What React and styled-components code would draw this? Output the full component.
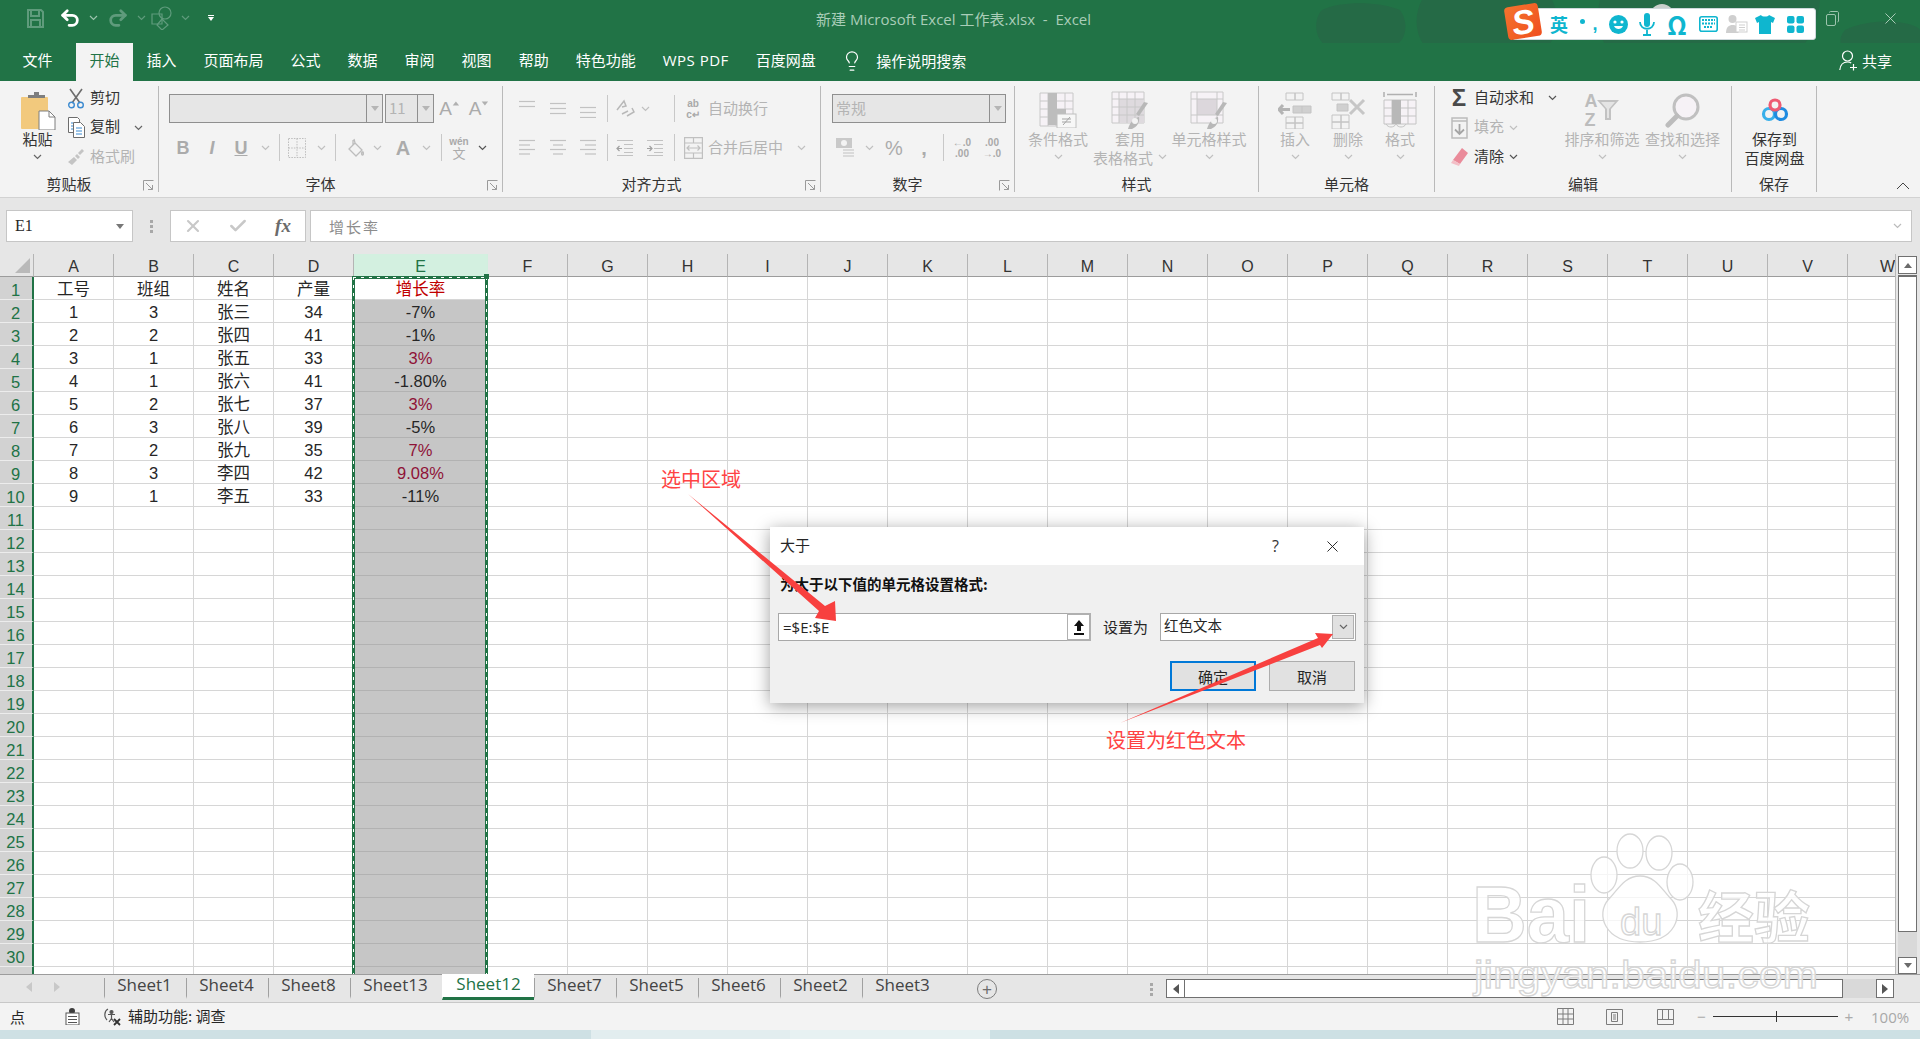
import React from 'react';
import styled, { createGlobalStyle } from 'styled-components';
import { Undo2, Redo2, Lightbulb, X, Check } from 'lucide-react';

const CJK = '"Noto Sans CJK SC", sans-serif';
const UI = '"Open Sans", "Noto Sans CJK SC", sans-serif';
const NUM = '"Liberation Sans", "Noto Sans CJK SC", sans-serif';
const GREEN = '#217346';
const OFF = '#b4b4b4';

const Global = createGlobalStyle`
  html, body { margin: 0; padding: 0; background: #e6e6e6; }
  * { box-sizing: border-box; }
  svg { display: block; flex: none; }
`;

const Page = styled.div`
  position: relative; width: 1920px; height: 1039px; overflow: hidden;
  display: flex; flex-direction: column; font-family: ${CJK}; color: #262626; font-size: 15px;
`;

/* ---------- title ---------- */
const TitleBar = styled.div`
  height: 43px; flex: none; background: ${GREEN}; position: relative;
  display: flex; align-items: center; padding-bottom: 7px;
`;
const Clouds = styled.svg`position: absolute; left: 1300px; top: 0;`;
const Qat = styled.div`display: flex; align-items: center; width: 816px; flex: none; position: relative; padding-left: 22px;`;
const DocTitle = styled.div`
  width: 290px; flex: none; white-space: pre; color: #a9cdb8; font: 15px ${UI}; position: relative;
`;
const WinBtns = styled.div`
  position: relative; margin-left: auto; display: flex; align-items: center; gap: 42px; padding-right: 20px;
`;
const Slot = styled.div`
  width: ${p => p.$w}px; flex: none; display: flex; align-items: center; justify-content: center;
  height: 100%; color: ${p => p.$c || OFF};
`;

const TabBar = styled.div`
  height: 38px; flex: none; background: ${GREEN}; display: flex; align-items: stretch; padding-left: 9px; position: relative;
`;
const Tab = styled.div`
  padding: 0 13.5px 5px; display: flex; align-items: center; white-space: nowrap; font-size: 15px; font-family: ${UI};
  background: ${p => p.$on ? '#f3f3f3' : 'transparent'}; color: ${p => p.$on ? GREEN : '#fff'};
  margin-right: ${p => p.$mr || 0}px; position: relative; letter-spacing: ${p => p.$ls || 0}px;
`;
const Search = styled.div`
  display: flex; align-items: center; gap: 13px; margin-left: 12px; color: #fff; font-size: 15px; padding-bottom: 3px;
`;
const Share = styled.div`
  display: flex; align-items: center; gap: 3px; color: #fff; font-size: 15px; margin-left: auto; padding-right: 28px; position: relative; padding-bottom: 3px;
`;

/* ---------- ime ---------- */
const Ime = styled.div`
  position: absolute; left: 1512px; top: 8px; width: 304px; height: 32px; background: #fff; border-radius: 3px;
  border: 1px solid #cfd8dc; display: flex; align-items: center; padding-left: 33px; color: #0fb6cf;
`;
const ImeLogo = styled.div`
  position: absolute; left: 1506px; top: 5px; width: 34px; height: 33px; border-radius: 4px; transform: rotate(-9deg);
  background: linear-gradient(140deg, #f4732e, #f0501e); color: #fff; font: italic 700 34px/32px ${NUM};
  display: flex; align-items: center; justify-content: center;
`;
const ImeBump = styled.div`
  position: absolute; left: 1650px; top: 4px; width: 24px; height: 12px; border-radius: 12px 12px 0 0; background: #c9cfcc;
`;
const ImeSlot = styled.div`
  width: ${p => p.$w}px; flex: none; display: flex; justify-content: center; align-items: center;
  font-weight: 700; font-size: ${p => p.$fs || 16}px; line-height: 1;
`;
const PunctDot = styled.i`width: 5px; height: 5px; border-radius: 50%; background: #0fb6cf; margin: -6px 7px 0 0; display: block;`;
const PunctMark = styled.span`font: 700 18px/1 ${NUM};`;

/* ---------- ribbon ---------- */
const Ribbon = styled.div`
  height: 117px; flex: none; background: #f3f3f3; border-bottom: 1px solid #d2d2d2; padding-top: 5px; display: flex; align-items: flex-start;
`;
const Group = styled.div`
  width: ${p => p.$w}px; height: 106px; flex: none; display: flex; flex-direction: column; border-right: 1px solid #b9b9b9;
`;
const Body = styled.div`
  height: 92px; flex: none; display: flex; padding-left: ${p => p.$pl || 0}px;
`;
const Foot = styled.div`height: 14px; display: flex; align-items: center;`;
const FootLabel = styled.div`flex: 1; text-align: center; font-size: 15px; color: #333; line-height: 14px; position: relative; top: -1px;`;
const LauncherBox = styled.div`width: 20px; flex: none; display: flex; align-items: center; justify-content: center;`;

const Big = styled.div`
  width: ${p => p.$w}px; flex: none; display: flex; flex-direction: column; align-items: center; padding-top: 4px;
  color: ${p => p.$on ? '#333' : OFF}; font-size: 15px; margin-left: ${p => p.$ml || 0}px; white-space: nowrap;
`;
const BigIcon = styled.div`height: 40px; display: flex; align-items: center; justify-content: center; flex: none;`;
const BigLine = styled.div`
  height: 19px; line-height: 17px; padding-bottom: 3px; display: flex; align-items: center; gap: 5px; justify-content: center; flex: none;
`;
const SmallCol = styled.div`display: flex; flex-direction: column; gap: 5.5px; margin-left: ${p => p.$ml || 0}px; width: ${p => p.$w ? p.$w + 'px' : 'auto'}; flex: none;`;
const SmallRow = styled.div`
  height: 24px; display: flex; align-items: center; font-size: 15px; color: ${p => p.$on ? '#333' : OFF}; white-space: nowrap;
`;
const RowText = styled.span`position: relative; top: -2px;`;
const IconSlot = styled.div`width: ${p => p.$w || 20}px; flex: none; display: flex; justify-content: center; align-items: center; margin-right: ${p => p.$mr || 4}px;`;
const ChevGap = styled.span`margin-left: ${p => p.$ml}px; display: inline-flex;`;

const Rows = styled.div`display: flex; flex-direction: column; gap: 10px; padding-top: 8px; flex: none;`;
const Row = styled.div`height: 29px; display: flex; align-items: center; padding-left: ${p => p.$pl || 0}px;`;
const Combo = styled.div`
  width: ${p => p.$w}px; height: 29px; margin-right: ${p => p.$mr || 0}px; flex: none; background: #e6e6e6; border: 1px solid #8f8f8f;
  display: flex; color: ${OFF}; font: 15px ${CJK}; line-height: 25px;
`;
const ComboText = styled.div`flex: 1; padding-left: 3px;`;
const ComboArrow = styled.div`
  width: 16px; border-left: 1px solid #8f8f8f; display: flex; align-items: center; justify-content: center;
`;
const Sep = styled.div`width: 1px; height: 27px; background: #c8c8c8; flex: none;`;
const Tri = styled.div`
  width: 0; height: 0; border-left: 4px solid transparent; border-right: 4px solid transparent;
  ${p => p.$up
    ? `border-bottom: 5px solid ${p.$c || '#b5b5b5'};`
    : `border-top: 5px solid ${p.$c || '#b5b5b5'};`}
`;
const FmtGlyph = styled.span`
  font: ${p => p.$it ? 'italic ' : ''}${p => p.$wt || 700} ${p => p.$fs || 17}px ${NUM}; color: ${p => p.$c || '#ababab'};
  text-decoration: ${p => p.$u ? 'underline' : 'none'}; line-height: 1;
`;
const SizeMark = styled.div`margin: -11px 0 0 0; width: 7px; display: flex; justify-content: center; transform: scale(.8);`;
const TinyStack = styled.div`display: flex; flex-direction: column; align-items: center; font: 700 10px/11px ${NUM}; color: #a9a9a9;`;
const TextRun = styled.div`font-size: 15px; color: ${OFF}; white-space: nowrap; flex: none; padding-left: ${p => p.$pl || 0}px; position: relative; top: -1px;`;
const Sigma = styled.span`font: 700 24px/1 ${NUM}; color: #4a4a4a;`;

/* ---------- formula ---------- */
const FormulaBar = styled.div`
  height: 56px; flex: none; background: #e6e6e6; padding: 12px 8px 12px 6px; display: flex; align-items: stretch;
`;
const NameBox = styled.div`
  width: 127px; flex: none; background: #fff; border: 1px solid #c6c6c6; display: flex; align-items: center; justify-content: space-between;
  padding: 0 8px 0 8px; font: 16px "Liberation Serif", serif;
`;
const Dots = styled.div`
  width: ${p => p.$w}px; flex: none; display: flex; flex-direction: column; gap: 2px; align-items: center; justify-content: center;
  & > i { width: 3px; height: 3px; background: #a8a8a8; display: block; }
`;
const FxBox = styled.div`
  width: 136px; flex: none; background: #fff; border: 1px solid #c6c6c6; display: flex; align-items: center; color: #c8c8c8;
`;
const FxSlot = styled.div`width: ${p => p.$w}px; flex: none; display: flex; justify-content: center;`;
const FxGlyph = styled.span`font: italic 700 19px "Liberation Serif", serif; color: #6b6b6b;`;
const FormulaInput = styled.div`
  flex: 1; margin-left: 4px; background: #fff; border: 1px solid #c6c6c6; display: flex; align-items: center; justify-content: space-between;
  padding: 0 9px 0 18px; color: #8c8c8c; letter-spacing: 2px; font-size: 15px;
`;

/* ---------- sheet ---------- */
const SheetArea = styled.div`height: 720px; flex: none; display: flex; background: #e6e6e6;`;
const Grid = styled.div`width: 1896px; flex: none; overflow: hidden; position: relative; background: #fff; border-right: 1px solid #b8b8b8;`;
const cols = '34px repeat(4, 80px) 134px repeat(18, 80px)';
const HeadRow = styled.div`
  display: grid; grid-template-columns: ${cols}; height: 23px; background: #e6e6e6;
`;
const HeadCell = styled.div`
  border-right: 1px solid ${p => p.$on ? '#d2efdf' : '#b4b4b4'}; border-bottom: 1px solid ${p => p.$on ? GREEN : '#9c9c9c'};
  background: ${p => p.$on ? '#d3f0e0' : '#e6e6e6'}; color: ${p => p.$on ? GREEN : '#333'};
  font: 16px/26px ${NUM}; text-align: center; overflow: hidden;
`;
const Corner = styled.div`
  border-right: 1px solid #b4b4b4; border-bottom: 1px solid #9c9c9c; display: flex; align-items: flex-end; justify-content: flex-end; padding: 0 3px 3px 0;
`;
const DataRow = styled.div`display: grid; grid-template-columns: ${cols}; height: 23px;`;
const RowHead = styled.div`
  background: #d2d2d2; color: ${GREEN}; border-right: 2px solid ${GREEN}; border-bottom: 1px solid #ececec;
  font: 16.5px/26px ${NUM}; text-align: center; padding-right: 1px; overflow: hidden;
`;
const Cell = styled.div`
  border-right: 1px solid #d6d6d6; border-bottom: 1px solid ${p => p.$sel ? '#b2b2b2' : '#d6d6d6'};
  background: ${p => p.$sel ? '#c6c6c6' : '#fff'}; color: ${p => p.$c || '#262626'};
  font: 16.5px/25px ${NUM}; text-align: center; white-space: nowrap; overflow: hidden;
`;
const Ants = styled.div`
  position: absolute; left: 352px; top: 22px; width: 136px; height: 720px; border: 3px solid ${GREEN};
  &::after {
    content: ''; position: absolute; inset: -2px;
    background:
      repeating-linear-gradient(to bottom, #fff 0 3px, transparent 3px 8px) left top / 1px 100% no-repeat,
      repeating-linear-gradient(to bottom, #fff 0 3px, transparent 3px 8px) right top / 1px 100% no-repeat,
      repeating-linear-gradient(to right, #fff 0 3px, transparent 3px 8px) left top / 100% 1px no-repeat;
  }
`;
const Handle = styled.div`position: absolute; left: 484px; top: 20px; width: 5px; height: 5px; background: ${GREEN};`;
const VScroll = styled.div`
  width: 20px; margin-left: 2px; flex: none; display: flex; flex-direction: column; padding-top: 2px;
`;
const ScrollBtn = styled.div`
  width: ${p => p.$w || 19}px; height: ${p => p.$h || 18}px; flex: none; background: #fff; border: 1px solid #707070; display: flex; align-items: center; justify-content: center;
`;
const VThumb = styled.div`width: 19px; height: 657px; flex: none; background: #fff; border: 1px solid #707070; border-top-width: 2px; margin-top: 1px;`;
const VTrack = styled.div`width: 19px; flex: 1; background: #d9d9d9;`;

const SheetTabs = styled.div`
  height: 29px; flex: none; background: #e6e6e6; border-top: 1px solid #9c9c9c; border-bottom: 1px solid #c8c8c8; display: flex; align-items: flex-start;
`;
const TabNav = styled.div`width: 104px; flex: none; display: flex; padding: 7px 0 0 26px; gap: 22px;`;
const SheetTab = styled.div`
  width: ${p => p.$w}px; flex: none; font: 17px/20px ${UI}; text-align: center; padding-right: ${p => p.$on ? 0 : 2}px;
  color: ${p => p.$on ? GREEN : '#444'}; background: ${p => p.$on ? '#fff' : 'transparent'};
  border-bottom: 3px solid ${p => p.$on ? GREEN : 'transparent'};
  border-left: 1px solid ${p => p.$on ? 'transparent' : '#a0a0a0'};
  margin-top: ${p => p.$on ? -1 : 3}px; height: ${p => p.$on ? 26 : 21}px; line-height: ${p => p.$on ? 20 : 13}px;
`;
const PlusBtn = styled.div`
  width: 20px; height: 20px; border: 1px solid #7d7d7d; border-radius: 50%; margin: 4px 0 0 33px; flex: none;
  display: flex; align-items: center; justify-content: center; color: #6d6d6d; font: 17px/1 ${NUM};
`;
const TabDots = styled(Dots)`margin: 4px 0 0 151px; height: 20px;`;
const HBar = styled.div`margin: 4px 0 0 12px; height: 19px; width: 728px; flex: none; display: flex; background: #d9d9d9;`;
const HThumb = styled.div`width: 658px; flex: none; background: #fff; border: 1px solid #707070; border-left-width: 0;`;
const HGap = styled.div`flex: 1;`;

const Status = styled.div`
  height: 27px; flex: none; background: #f3f3f3; display: flex; align-items: center; font-size: 15px; padding-left: 10px;
`;
const StatusSlot = styled.div`
  width: ${p => p.$w}px; margin-left: ${p => p.$ml || 0}px; flex: none; display: flex; justify-content: center; align-items: center;
`;
const StatusText = styled.span`margin-left: 3px; white-space: nowrap; position: relative; top: -1px; font-size: 15px;`;
const StatusRight = styled.div`margin-left: auto; display: flex; align-items: center;`;
const StatusPct = styled.div`color: #a8a8a8; font: 15px ${UI}; width: 40px; margin: 0 9px 0 16px; white-space: nowrap;`;
const Zoomer = styled.div`
  width: 125px; height: 1px; background: #333; margin: 0 5px; position: relative;
  &::after { content: ''; position: absolute; left: 63px; top: -5px; width: 1px; height: 11px; background: #333; }
`;
const Desk = styled.div`flex: 1; display: flex;`;
const DeskPart = styled.div`width: ${p => p.$w ? p.$w + 'px' : 'auto'}; flex: ${p => p.$w ? 'none' : 1}; background: ${p => p.$c};`;

const Collapse = styled.div`
  flex: 1; height: 106px; display: flex; align-items: flex-end; justify-content: flex-end; padding: 0 10px 2px 0;
`;

/* ---------- dialog ---------- */
const Dialog = styled.div`
  position: absolute; left: 770px; top: 527px; width: 594px; height: 176px; background: #f0f0f0;
  box-shadow: 0 3px 16px rgba(0,0,0,.38); font-size: 15px;
`;
const DlgHead = styled.div`height: 38px; background: #fff; display: flex; align-items: center; padding: 0 22px 0 10px;`;
const DlgTitle = styled.div`flex: 1; padding-bottom: 3px;`;
const DlgHelp = styled.div`width: 51px; font: 16px ${UI}; color: #333; text-align: left;`;
const DlgLabel = styled.div`font-weight: 700; font-size: 14.5px; line-height: 20px; padding: 9px 0 0 10px; color: #111;`;
const DlgFields = styled.div`display: flex; align-items: center; margin-top: 19px; padding-left: 8px;`;
const DlgInput = styled.div`
  width: 313px; height: 28px; background: #fff; border: 1px solid #a8a8a8; display: flex; align-items: center; font: 15px ${UI};
  padding-left: 4px; justify-content: space-between;
`;
const RefBtn = styled.div`
  width: 24px; height: 28px; margin-right: -1px; background: #fff; border: 2px solid #b0b0b0; border-left-width: 1px; display: flex; align-items: center; justify-content: center;
`;
const DlgText = styled.div`margin: 0 12px; flex: none; position: relative; top: -1px;`;
const DlgSelect = styled.div`
  width: 196px; height: 28px; background: #fff; border: 1px solid #a8a8a8; display: flex; align-items: center; justify-content: space-between; padding-left: 3px; font-size: 14.5px; line-height: 22px;
`;
const SelectValue = styled.span`position: relative; top: -2px;`;
const DropBtn = styled.div`
  width: 22px; height: 24px; margin-right: 1px; background: #e1e1e1; border: 1px solid #b0b0b0; display: flex; align-items: center; justify-content: center;
`;
const DlgBtns = styled.div`display: flex; justify-content: flex-end; gap: 13px; padding-right: 9px; margin-top: 20px;`;
const DlgBtn = styled.div`
  width: 86px; height: 30px; background: #e1e1e1; border: ${p => p.$on ? '2px solid #0078d7' : '1px solid #adadad'};
  display: flex; align-items: center; justify-content: center; font-size: 15px;
`;

/* ---------- overlay ---------- */
const Overlay = styled.svg`position: absolute; left: 0; top: 0; pointer-events: none;`;
const Note = styled.div`
  position: absolute; left: ${p => p.$x}px; top: ${p => p.$y}px; color: #ff4343; font-size: 20px; line-height: 24px; white-space: nowrap;
`;

/* ---------- icons ---------- */
const Chev = ({ c = '#a0a0a0' }) => (
  <svg width="9" height="6" viewBox="0 0 9 6"><path d="M1 1l3.500 3.500L8 1" fill="none" stroke={c} strokeWidth="1.200" /></svg>
);
const Launcher = () => (
  <svg width="11" height="11" viewBox="0 0 11 11" fill="none" stroke="#9a9a9a"><path d="M.5 10.500v-10h10M3 3l6.500 6.500M9.500 5v4.500H5" /></svg>
);
const SaveIc = () => (
  <svg width="17" height="19" viewBox="0 0 17 19" fill="none" stroke="#5f9b7c" strokeWidth="2"><path d="M1 1h13l2 2v15H1z" /><path d="M4 1v6h8V1M4 18v-7h9v7" /></svg>
);
const ShapeIc = () => (
  <svg width="22" height="24" viewBox="0 0 22 24" fill="none" stroke="#5f9b7c" strokeWidth="1.200"><path d="M1 8h10v10H1z" /><circle cx="14" cy="7" r="6" /><path d="M11 13l6 6-6 5-5-5z" /></svg>
);
const QatMore = () => (
  <svg width="8" height="8" viewBox="0 0 8 8" fill="#fff"><path d="M1 1h6v1H1zM1 3h6L4 7z" /></svg>
);
const ShareIc = () => (
  <svg width="20" height="21" viewBox="0 0 20 21" fill="none" stroke="#fff" strokeWidth="1.200"><circle cx="8.500" cy="6" r="5" /><path d="M.8 20c.5-5 3-8 7.700-8 1.500 0 2.700.3 3.700 1M14.500 14v6.500M11 17.500h7" /></svg>
);
const PasteIc = () => (
  <svg width="36" height="39" viewBox="0 0 36 39">
    <rect x="1" y="6" width="27" height="32" rx="1" fill="#f2c97d" />
    <path d="M8 7V4h6V1h5v3h6v3z" fill="#7e7e7e" />
    <path d="M19 20h10l6 6v13H19z" fill="#fff" stroke="#7e7e7e" />
    <path d="M29 20v6h6" fill="none" stroke="#7e7e7e" />
  </svg>
);
const ScissorsIc = () => (
  <svg width="16" height="21" viewBox="0 0 16 21" fill="none">
    <path d="M2 1l10 14M14 1L4 15" stroke="#6d6d6d" strokeWidth="1.600" />
    <circle cx="3.500" cy="17" r="2.800" stroke="#3b8ad0" strokeWidth="1.400" /><circle cx="12.500" cy="17" r="2.800" stroke="#3b8ad0" strokeWidth="1.400" />
  </svg>
);
const CopyIc = () => (
  <svg width="17" height="21" viewBox="0 0 17 21" fill="#fff" stroke="#6d6d6d">
    <path d="M.5.500h9l2 2v13H.5z" /><path d="M5.500 5.500h7l4 4v11h-11z" />
    <path d="M3 6h2M3 9h2M3 12h2" stroke="#3b8ad0" /><path d="M8 11h6M8 14h6M8 17h6" stroke="#3b8ad0" />
  </svg>
);
const BrushIc = () => (
  <svg width="18" height="18" viewBox="0 0 18 18" fill="#c4c4c4"><path d="M11 5l4-4 2 2-4 4zM10 6l3 3-2 2-3-3zM7 9l3 3-5 5-4-3z" /></svg>
);
const BorderIc = () => (
  <svg width="18" height="20" viewBox="0 0 18 20" fill="none" stroke="#bdbdbd" strokeDasharray="1.500 1.200"><path d="M.5.500h17v19H.5zM.5 10h17M9 .5v19" /></svg>
);
const FillIc = () => (
  <svg width="17" height="20" viewBox="0 0 17 20" fill="none" stroke="#bdbdbd" strokeWidth="1.300"><path d="M8 5l7 7-6 6-7-7zM7 1l1 4M6 2v5" /><path d="M16 14c1 2 0 3-.5 3s-1.500-1-.5-3z" fill="#d5d5d5" /></svg>
);
const LinesIc = ({ kind, n = 3, top = 0, gap = 5 }) => {
  const ws = { l: [16, 11, 16, 11], c: [16, 10, 16, 10], r: [16, 11, 16, 11], f: [16, 16, 16, 16] }[kind];
  return (
    <svg width="18" height="19" viewBox="0 0 18 19" stroke="#c2c2c2" strokeWidth="1.200">
      {Array.from({ length: n }).map((_, i) => {
        const w = ws[i];
        const x = kind === 'r' ? 17 - w : kind === 'c' ? 9 - w / 2 : 1;
        return <path key={i} d={`M${x} ${top + i * gap + .5}h${w}`} />;
      })}
    </svg>
  );
};
const IndentIc = ({ out }) => (
  <svg width="18" height="18" viewBox="0 0 18 18" fill="none" stroke="#c2c2c2" strokeWidth="1.200">
    <path d="M1 1.500h16M8 5.500h9M8 9.500h9M8 13.500h9M1 16.500h16" />
    <path d={out ? 'M6 9.500H1m2.500-2.500L1 9.500 3.500 12' : 'M1 9.500h5M3.500 7L6 9.500 3.500 12'} stroke="#a0a0a0" />
  </svg>
);
const OrientIc = () => (
  <svg width="20" height="20" viewBox="0 0 20 20" fill="none" stroke="#b8b8b8" strokeWidth="1.500"><path d="M2 11L9 2l2 5-4 1M7 15l6-3M12 17l7-4-2-4" /></svg>
);
const MergeIc = () => (
  <svg width="19" height="22" viewBox="0 0 19 22" fill="none" stroke="#c0c0c0" strokeWidth="1.200"><path d="M.6.600h17.800v20.800H.6zM.6 6h17.800M.6 16h17.800M9.500.6V6M9.500 16v5.400M3 11h13M5.500 8.500L3 11l2.500 2.500M13.500 8.500L16 11l-2.500 2.500" /></svg>
);
const MoneyIc = () => (
  <svg width="20" height="22" viewBox="0 0 20 22"><rect x="1" y="1" width="16" height="10" fill="#c9c9c9" /><circle cx="9" cy="6" r="3" fill="#f3f3f3" /><path d="M8 12h11v2H8zM8 15h11v2H8zM8 18h11v2H8z" fill="#dadada" /></svg>
);
const CondIc = () => (
  <svg width="38" height="36" viewBox="0 0 38 36">
    <path d="M1 1h33v33H1z" fill="#f6f2f6" stroke="#c8c8c8" />
    <path d="M1 9h33M1 17h33M1 25h33M9 1v33M17 1v33M26 1v33" stroke="#c8c8c8" fill="none" />
    <path d="M9 1h9v8h0v8h9v8h-9v8H9v-8z" fill="#bdbdbd" />
    <rect x="18" y="22" width="19" height="14" fill="#f7f7f7" stroke="#c0c0c0" />
    <path d="M24 33l7-8M23 27h9M23 30h9" stroke="#a5a5a5" />
  </svg>
);
const TableIc = ({ cell }) => (
  <svg width="38" height="38" viewBox="0 0 38 38">
    <path d="M1 1h32v31H1z" fill="#f6f2f6" stroke="#c8c8c8" />
    {cell ? <path d="M7 8h20v16H7z" fill="#dcd7dc" /> : <path d="M8 8h25v24H8z" fill="#dedade" />}
    {cell ? <path d="M1 8h32M1 24h32M7 1v31M27 1v31" stroke="#c8c8c8" fill="none" /> :
      <path d="M1 8h32M1 16h32M1 24h32M8 1v31M16 1v31M24 1v31" stroke="#c8c8c8" fill="none" />}
    <path d="M37 12l-9 13-3-2 8-12z" fill="#b8b8b8" /><path d="M17 38c2-7 6-11 11-12 1 5-2 10-7 12z" fill="#b8b8b8" />
    <circle cx="24" cy="30" r="3" fill="#f3f3f3" />
  </svg>
);
const InsertIc = () => (
  <svg width="34" height="38" viewBox="0 0 34 38" fill="none" stroke="#c4c4c4"><path d="M8 2h9v7H8zM17 2h8v7h-8zM8 26h9v6H8zM17 26h8v6h-8zM8 32h9v6H8zM17 32h8v6h-8z" /><path d="M15 15h18v7H15zM24 15v7" fill="#d0d0d0" /><path d="M1 18.500h11M5 14l-4 4.500L5 23" stroke="#b4b4b4" strokeWidth="3" /></svg>
);
const DeleteIc = () => (
  <svg width="36" height="38" viewBox="0 0 36 38" fill="none" stroke="#c4c4c4"><path d="M2 2h9v7H2zM11 2h8v7h-8zM2 24h9v7H2zM11 24h8v7h-8zM2 31h9v7H2zM11 31h8v7h-8z" /><path d="M7 13h11v7H7z" fill="#d0d0d0" /><path d="M20 9l14 14M34 9L20 23" stroke="#c6c6c6" strokeWidth="3" /></svg>
);
const FormatIc = () => (
  <svg width="34" height="38" viewBox="0 0 34 38" fill="none" stroke="#c4c4c4"><path d="M1 1v5M33 1v5M4 3.500h26" stroke="#b0b0b0" strokeWidth="1.500" /><path d="M1 9h32v24H1z" fill="#f6f2f6" /><path d="M1 17h32M1 25h32M9 9v24M17 9v24M25 9v24" /><path d="M9 9h9v24H9z" fill="#b8b8b8" stroke="none" /><path d="M3 33c2 4 8 4 10 0M13 33c2 4 8 4 10 0" /></svg>
);
const FillDownIc = () => (
  <svg width="17" height="22" viewBox="0 0 17 22" fill="none" stroke="#bcbcbc" strokeWidth="1.200"><path d="M1 1h15v20H1zM1 4h15" strokeWidth="1.500" /><path d="M8.500 7v10M4 12.500l4.500 4.500 4.500-4.500" stroke="#a5a5a5" strokeWidth="1.800" /></svg>
);
const EraserIc = () => (
  <svg width="17" height="18" viewBox="0 0 17 18"><path d="M11 0l6 5-8 11-7-4z" fill="#ea8b9a" /><path d="M2 12l7 4-1 2-8-3z" fill="#f3bec6" /></svg>
);
const SortIc = () => (
  <svg width="24" height="22" viewBox="0 0 24 22"><path d="M1 1h22l-8 9v11h-6V10z" fill="#c2c2c2" /><path d="M5 3h14l-6 7v9h-2v-9z" fill="#e4e4e4" /></svg>
);
const SortLetters = styled.div`
  display: flex; flex-direction: column; gap: 1px; font: 700 18px/18px ${NUM}; color: #bcbcbc; margin-right: -2px;
`;
const FindIc = () => (
  <svg width="35" height="35" viewBox="0 0 35 35" fill="none"><circle cx="21" cy="14" r="12" fill="#f6f2f6" stroke="#c0c0c0" strokeWidth="3" /><path d="M12 23L3 32" stroke="#bcbcbc" strokeWidth="5" strokeLinecap="round" /></svg>
);
const CloudIc = () => (
  <svg width="28" height="24" viewBox="0 0 28 24" fill="none" strokeWidth="3.200">
    <circle cx="8" cy="16" r="5.500" stroke="#38b0ea" /><circle cx="20" cy="16" r="5.500" stroke="#1f8be0" /><circle cx="14" cy="7" r="5" stroke="#ee5a72" />
  </svg>
);

const SmileIc = () => (
  <svg width="19" height="19" viewBox="0 0 19 19"><circle cx="9.500" cy="9.500" r="9.500" fill="#0fb6cf" /><circle cx="6" cy="7" r="1.600" fill="#fff" /><circle cx="13" cy="7" r="1.600" fill="#fff" /><path d="M5 11c1.500 4 7.500 4 9 0z" fill="#fff" /></svg>
);
const MicIc = () => (
  <svg width="16" height="23" viewBox="0 0 16 23" fill="none" stroke="#0fb6cf"><rect x="5" y="0" width="6" height="14" rx="3" fill="#0fb6cf" stroke="none" /><path d="M1 9c0 9 14 9 14 0M8 17v5M4 22h8" strokeWidth="1.800" /></svg>
);
const KbIc = () => (
  <svg width="19" height="16" viewBox="0 0 19 16"><rect x=".8" y=".8" width="17.400" height="14.400" rx="2" fill="none" stroke="#0fb6cf" strokeWidth="1.600" /><path d="M3 4h13M3 7.500h13M5 11h9" stroke="#0fb6cf" strokeWidth="2" strokeDasharray="2 1" /></svg>
);
const UserIc = () => (
  <svg width="22" height="18" viewBox="0 0 22 18"><circle cx="6.500" cy="4" r="4" fill="#cfcfcf" /><path d="M0 18c0-6 3-8 6.500-8s6 1 6 8z" fill="#cfcfcf" /><rect x="10" y="7" width="11" height="10" fill="#fff" stroke="#cfcfcf" /><path d="M13 10h6M13 12.500h6M13 15h6" stroke="#cfcfcf" /></svg>
);
const ShirtIc = () => (
  <svg width="20" height="19" viewBox="0 0 20 19"><path d="M6 0c1 2 7 2 8 0l6 3-2 5-2-1v12H4V7L2 8 0 3z" fill="#0fb6cf" /></svg>
);
const AppsIc = () => (
  <svg width="17" height="17" viewBox="0 0 17 17" fill="#0fb6cf"><rect width="7.500" height="7.500" rx="2" /><rect x="9.500" width="7.500" height="7.500" rx="2" /><rect y="9.500" width="7.500" height="7.500" rx="2" /><rect x="9.500" y="9.500" width="7.500" height="7.500" rx="2" /></svg>
);
const RestoreIc = () => (
  <svg width="13" height="15" viewBox="0 0 13 15" fill="none" stroke="#9cc4ad"><rect x=".5" y="3.500" width="9" height="11" rx="1.500" /><path d="M3.500 1.500c0-.6.400-1 1-1h6.500c1 0 1.500.5 1.500 1.500v8c0 .600-.400 1-1 1" /></svg>
);
const ClockIc = () => (
  <svg width="15" height="17" viewBox="0 0 15 17" fill="#555"><circle cx="7" cy="3" r="3" fill="#3d3d3d" /><rect x="1" y="5" width="13" height="12" fill="#fff" stroke="#555" /><path d="M3 8h9v1H3zM3 11h9v1H3zM3 14h9v1H3z" fill="#555" /></svg>
);
const AccessIc = () => (
  <svg width="20" height="18" viewBox="0 0 20 18" fill="none" stroke="#555" strokeWidth="1.200"><path d="M5 1C1 3 1 9 4 12" /><circle cx="8.500" cy="4" r="1.500" fill="#555" /><path d="M5 6.500h7M8.500 6.500v4M6 14l2.500-3.500L11 14" /><path d="M11 11l6 6M17 11l-6 6" stroke="#333" strokeWidth="1.800" /></svg>
);
const ViewNormal = () => (
  <svg width="17" height="17" viewBox="0 0 17 17" fill="none" stroke="#7c7c7c"><path d="M.5.500h16v16H.5zM.5 6h16M.5 11h16M6 .5v16M11 .5v16" /></svg>
);
const ViewPage = () => (
  <svg width="17" height="16" viewBox="0 0 17 16" fill="none" stroke="#7c7c7c"><path d="M.5.500h16v15H.5z" /><path d="M5.500 3.500h6v9h-6zM7 6h3M7 8h3M7 10h3" /></svg>
);
const ViewBreak = () => (
  <svg width="17" height="16" viewBox="0 0 17 16" fill="none" stroke="#7c7c7c"><path d="M.5.500h16v15H.5zM.5 10.500h16M5.500.5v10M11.500.5v10" /></svg>
);

const ArrowLeft = ({ c = '#555' }) => <svg width="6" height="10" viewBox="0 0 6 10" fill={c}><path d="M6 0v10L0 5z" /></svg>;
const ArrowRight = ({ c = '#555' }) => <svg width="6" height="10" viewBox="0 0 6 10" fill={c}><path d="M0 0v10l6-5z" /></svg>;

/* ---------- data ---------- */
const LETTERS = 'ABCDEFGHIJKLMNOPQRSTUVW'.split('');
const RED = '#8f1237';
const DATA = [
  { v: ['工号', '班组', '姓名', '产量', '增长率'], c: '#c00000' },
  { v: ['1', '3', '张三', '34', '-7%'] },
  { v: ['2', '2', '张四', '41', '-1%'] },
  { v: ['3', '1', '张五', '33', '3%'], c: RED },
  { v: ['4', '1', '张六', '41', '-1.80%'] },
  { v: ['5', '2', '张七', '37', '3%'], c: RED },
  { v: ['6', '3', '张八', '39', '-5%'] },
  { v: ['7', '2', '张九', '35', '7%'], c: RED },
  { v: ['8', '3', '李四', '42', '9.08%'], c: RED },
  { v: ['9', '1', '李五', '33', '-11%'] },
];
const TABS = [['Sheet1', 82], ['Sheet4', 82], ['Sheet8', 82], ['Sheet13', 92], ['Sheet12', 92, true], ['Sheet7', 82], ['Sheet5', 82], ['Sheet6', 82], ['Sheet2', 82], ['Sheet3', 82]];

const Foots = ({ text, launcher }) => (
  <Foot><FootLabel>{text}</FootLabel>{launcher && <LauncherBox><Launcher /></LauncherBox>}</Foot>
);

export default function App() {
  return (
    <Page>
      <Global />
      <TitleBar>
        <Clouds width="620" height="81" viewBox="0 0 620 81" fill="#256a46">
          <path d="M22 10c20-10 60-8 78 0 10 14 6 34-10 38-20 6-56 4-66-4-10-8-10-26-2-34z" />
          <path d="M122 0h130c10 20 4 40-8 50-30 12-92 12-116 0-14-14-14-36-6-50z" />
          <path d="M300 0h220c-4 40-20 60-60 60-50 6-130 8-150-8-12-14-14-36-10-52z" />
          <path d="M545 30c30-14 70-8 75 0v30h-60c-20-6-24-20-15-30z" />
        </Clouds>
        <Qat>
          <Slot $w={26}><SaveIc /></Slot>
          <Slot $w={44} $c="#fff"><Undo2 size={22} strokeWidth={3} /></Slot>
          <Slot $w={2}><Chev c="#9cc4ad" /></Slot>
          <Slot $w={47} $c="#5f9b7c"><Redo2 size={22} strokeWidth={3} /></Slot>
          <Slot $w={0}><Chev c="#5f9b7c" /></Slot>
          <Slot $w={42}><ShapeIc /></Slot>
          <Slot $w={4}><Chev c="#5f9b7c" /></Slot>
          <Slot $w={48}><QatMore /></Slot>
        </Qat>
        <DocTitle>{'新建 Microsoft Excel 工作表.xlsx  -  Excel'}</DocTitle>
        <WinBtns>
          <RestoreIc />
          <X size={19} strokeWidth={1} color="#cfe3d7" />
        </WinBtns>
      </TitleBar>

      <TabBar>
        <Tab $mr={10}>文件</Tab>
        <Tab $on>开始</Tab>
        {['插入', '页面布局', '公式', '数据', '审阅', '视图', '帮助', '特色功能'].map(t => <Tab key={t}>{t}</Tab>)}
        <Tab $ls={.5}>WPS PDF</Tab>
        <Tab>百度网盘</Tab>
        <Search><Lightbulb size={22} strokeWidth={1.3} color="#fff" /><span>操作说明搜索</span></Search>
        <Share><ShareIc /><span>共享</span></Share>
      </TabBar>

      <ImeBump />
      <Ime>
        <ImeSlot $w={26} $fs={18}>英</ImeSlot>
        <ImeSlot $w={34}><PunctDot /><PunctMark>,</PunctMark></ImeSlot>
        <ImeSlot $w={24}><SmileIc /></ImeSlot>
        <ImeSlot $w={34}><MicIc /></ImeSlot>
        <ImeSlot $w={26} $fs={25}>Ω</ImeSlot>
        <ImeSlot $w={36}><KbIc /></ImeSlot>
        <ImeSlot $w={22}><UserIc /></ImeSlot>
        <ImeSlot $w={34}><ShirtIc /></ImeSlot>
        <ImeSlot $w={26}><AppsIc /></ImeSlot>
      </Ime>
      <ImeLogo>S</ImeLogo>

      <Ribbon>
        <Group $w={159}>
          <Body>
            <Big $w={41} $ml={17} $on>
              <BigIcon><PasteIc /></BigIcon>
              <BigLine>粘贴</BigLine>
              <BigLine><Chev c="#666" /></BigLine>
            </Big>
            <SmallCol $ml={8}>
              <SmallRow $on><IconSlot><ScissorsIc /></IconSlot><RowText>剪切</RowText></SmallRow>
              <SmallRow $on><IconSlot><CopyIc /></IconSlot><RowText>复制</RowText><ChevGap $ml={14}><Chev c="#666" /></ChevGap></SmallRow>
              <SmallRow><IconSlot><BrushIc /></IconSlot><RowText>格式刷</RowText></SmallRow>
            </SmallCol>
          </Body>
          <Foots text="剪贴板" launcher />
        </Group>

        <Group $w={344}>
          <Body $pl={10}>
            <Rows>
              <Row>
                <Combo $w={214} $mr={2}><ComboText /><ComboArrow><Tri /></ComboArrow></Combo>
                <Combo $w={49}><ComboText>11</ComboText><ComboArrow><Tri /></ComboArrow></Combo>
                <Slot $w={30}><FmtGlyph $wt={400} $fs={19}>A</FmtGlyph><SizeMark><Tri $up $c="#b0b0b0" /></SizeMark></Slot>
                <Slot $w={29}><FmtGlyph $wt={400} $fs={19}>A</FmtGlyph><SizeMark><Tri $c="#b0b0b0" /></SizeMark></Slot>
              </Row>
              <Row>
                <Slot $w={28}><FmtGlyph $fs={18}>B</FmtGlyph></Slot>
                <Slot $w={30}><FmtGlyph $fs={18} $it>I</FmtGlyph></Slot>
                <Slot $w={28}><FmtGlyph $fs={18} $u>U</FmtGlyph></Slot>
                <Slot $w={20}><Chev c="#c0c0c0" /></Slot>
                <Slot $w={8}><Sep /></Slot>
                <Slot $w={28}><BorderIc /></Slot>
                <Slot $w={20}><Chev c="#c0c0c0" /></Slot>
                <Slot $w={8}><Sep /></Slot>
                <Slot $w={32}><FillIc /></Slot>
                <Slot $w={12}><Chev c="#c0c0c0" /></Slot>
                <Slot $w={40}><FmtGlyph $fs={20}>A</FmtGlyph></Slot>
                <Slot $w={6}><Chev c="#c0c0c0" /></Slot>
                <Slot $w={24}><Sep /></Slot>
                <Slot $w={12}><TinyStack>wén<FmtGlyph $wt={400} $fs={13}>文</FmtGlyph></TinyStack></Slot>
                <Slot $w={34}><Chev c="#555" /></Slot>
              </Row>
            </Rows>
          </Body>
          <Foots text="字体" launcher />
        </Group>

        <Group $w={318}>
          <Body $pl={8}>
            <Rows>
              <Row>
                <Slot $w={32}><LinesIc kind="f" n={2} top={2} /></Slot>
                <Slot $w={30}><LinesIc kind="f" n={3} top={4} /></Slot>
                <Slot $w={30}><LinesIc kind="f" n={3} top={8} /></Slot>
                <Slot $w={8}><Sep /></Slot>
                <Slot $w={28}><OrientIc /></Slot>
                <Slot $w={12}><Chev c="#c0c0c0" /></Slot>
                <Slot $w={19} />
                <Slot $w={9}><Sep /></Slot>
                <Slot $w={28}><TinyStack>ab<span>c↵</span></TinyStack></Slot>
                <TextRun $pl={1}>自动换行</TextRun>
              </Row>
              <Row>
                <Slot $w={32}><LinesIc kind="l" n={4} top={2} gap={4.5} /></Slot>
                <Slot $w={30}><LinesIc kind="c" n={4} top={2} gap={4.5} /></Slot>
                <Slot $w={30}><LinesIc kind="r" n={4} top={2} gap={4.5} /></Slot>
                <Slot $w={8}><Sep /></Slot>
                <Slot $w={28}><IndentIc out /></Slot>
                <Slot $w={32}><IndentIc /></Slot>
                <Slot $w={7}><Sep /></Slot>
                <Slot $w={30}><MergeIc /></Slot>
                <TextRun>合并后居中</TextRun>
                <Slot $w={36}><Chev c="#c0c0c0" /></Slot>
              </Row>
            </Rows>
          </Body>
          <Foots text="对齐方式" launcher />
        </Group>

        <Group $w={194}>
          <Body $pl={8}>
            <Rows>
              <Row $pl={3}>
                <Combo $w={174}><ComboText>常规</ComboText><ComboArrow><Tri /></ComboArrow></Combo>
              </Row>
              <Row>
                <Slot $w={32}><MoneyIc /></Slot>
                <Slot $w={16}><Chev c="#c0c0c0" /></Slot>
                <Slot $w={34}><FmtGlyph $wt={400} $fs={20}>%</FmtGlyph></Slot>
                <Slot $w={26}><FmtGlyph $fs={20}>,</FmtGlyph></Slot>
                <Slot $w={13}><Sep /></Slot>
                <Slot $w={24}><TinyStack><span>←.0</span><span>.00</span></TinyStack></Slot>
                <Slot $w={36}><TinyStack><span>.00</span><span>→.0</span></TinyStack></Slot>
              </Row>
            </Rows>
          </Body>
          <Foots text="数字" launcher />
        </Group>

        <Group $w={244}>
          <Body $pl={9}>
            <Big $w={68}><BigIcon><CondIc /></BigIcon><BigLine>条件格式</BigLine><BigLine><Chev c="#c0c0c0" /></BigLine></Big>
            <Big $w={76}><BigIcon><TableIc /></BigIcon><BigLine>套用</BigLine><BigLine>表格格式<Chev c="#c0c0c0" /></BigLine></Big>
            <Big $w={82}><BigIcon><TableIc cell /></BigIcon><BigLine>单元格样式</BigLine><BigLine><Chev c="#c0c0c0" /></BigLine></Big>
          </Body>
          <Foots text="样式" />
        </Group>

        <Group $w={176}>
          <Body $pl={10}>
            <Big $w={52}><BigIcon><InsertIc /></BigIcon><BigLine>插入</BigLine><BigLine><Chev c="#c0c0c0" /></BigLine></Big>
            <Big $w={54}><BigIcon><DeleteIc /></BigIcon><BigLine>删除</BigLine><BigLine><Chev c="#c0c0c0" /></BigLine></Big>
            <Big $w={50}><BigIcon><FormatIc /></BigIcon><BigLine>格式</BigLine><BigLine><Chev c="#c0c0c0" /></BigLine></Big>
          </Body>
          <Foots text="单元格" />
        </Group>

        <Group $w={297}>
          <Body>
            <SmallCol $ml={12} $w={115}>
              <SmallRow $on><IconSlot $w={24} $mr={3}><Sigma>Σ</Sigma></IconSlot><RowText>自动求和</RowText><ChevGap $ml={14}><Chev c="#555" /></ChevGap></SmallRow>
              <SmallRow><IconSlot $w={24} $mr={3}><FillDownIc /></IconSlot><RowText>填充</RowText><ChevGap $ml={5}><Chev c="#c0c0c0" /></ChevGap></SmallRow>
              <SmallRow $on><IconSlot $w={24} $mr={3}><EraserIc /></IconSlot><RowText>清除</RowText><ChevGap $ml={5}><Chev c="#555" /></ChevGap></SmallRow>
            </SmallCol>
            <Big $w={80}>
              <BigIcon><SortLetters><span>A</span><span>Z</span></SortLetters><SortIc /></BigIcon>
              <BigLine>排序和筛选</BigLine><BigLine><Chev c="#c0c0c0" /></BigLine>
            </Big>
            <Big $w={81}><BigIcon><FindIc /></BigIcon><BigLine>查找和选择</BigLine><BigLine><Chev c="#c0c0c0" /></BigLine></Big>
          </Body>
          <Foots text="编辑" />
        </Group>

        <Group $w={85}>
          <Body>
            <Big $w={85} $on><BigIcon><CloudIc /></BigIcon><BigLine>保存到</BigLine><BigLine>百度网盘</BigLine></Big>
          </Body>
          <Foots text="保存" />
        </Group>
        <Collapse>
          <svg width="14" height="8" viewBox="0 0 14 8" fill="none" stroke="#444"><path d="M1 7l6-6 6 6" /></svg>
        </Collapse>
      </Ribbon>

      <FormulaBar>
        <NameBox>E1<Tri $c="#777" /></NameBox>
        <Dots $w={37}><i /><i /><i /></Dots>
        <FxBox>
          <FxSlot $w={44}><X size={20} strokeWidth={2.5} /></FxSlot>
          <FxSlot $w={46}><Check size={20} strokeWidth={3} /></FxSlot>
          <FxSlot $w={44}><FxGlyph>fx</FxGlyph></FxSlot>
        </FxBox>
        <FormulaInput>增长率<Chev c="#bbb" /></FormulaInput>
      </FormulaBar>

      <SheetArea>
        <Grid>
          <HeadRow>
            <Corner><svg width="15" height="15" viewBox="0 0 15 15"><path d="M15 0v15H0z" fill="#b9b9b9" /></svg></Corner>
            {LETTERS.map(l => <HeadCell key={l} $on={l === 'E'}>{l}</HeadCell>)}
          </HeadRow>
          {Array.from({ length: 31 }).map((_, r) => {
            const d = DATA[r] || { v: [] };
            return (
              <DataRow key={r}>
                <RowHead>{r + 1}</RowHead>
                {LETTERS.map((l, c) => (
                  <Cell key={l} $sel={c === 4 && r > 0} $c={c === 4 ? d.c : undefined}>{d.v[c]}</Cell>
                ))}
              </DataRow>
            );
          })}
          <Ants />
          <Handle />
        </Grid>
        <VScroll>
          <ScrollBtn><Tri $up $c="#6b6b6b" /></ScrollBtn>
          <VThumb />
          <VTrack />
          <ScrollBtn $h={17}><Tri $c="#6b6b6b" /></ScrollBtn>
        </VScroll>
      </SheetArea>

      <SheetTabs>
        <TabNav><ArrowLeft c="#c8c8c8" /><ArrowRight c="#c8c8c8" /></TabNav>
        {TABS.map(([t, w, on]) => <SheetTab key={t} $w={w} $on={on}>{t}</SheetTab>)}
        <PlusBtn>+</PlusBtn>
        <TabDots $w={6}><i /><i /><i /></TabDots>
        <HBar>
          <ScrollBtn $h={19}><ArrowLeft /></ScrollBtn>
          <HThumb />
          <HGap />
          <ScrollBtn $h={19} $w={18}><ArrowRight /></ScrollBtn>
        </HBar>
      </SheetTabs>

      <Status>
        <span>点</span>
        <StatusSlot $w={40} $ml={27}><ClockIc /></StatusSlot>
        <StatusSlot $w={24} $ml={9}><AccessIc /></StatusSlot>
        <StatusText>辅助功能: 调查</StatusText>
        <StatusRight>
          <StatusSlot $w={50}><ViewNormal /></StatusSlot>
          <StatusSlot $w={49}><ViewPage /></StatusSlot>
          <StatusSlot $w={52}><ViewBreak /></StatusSlot>
          <StatusSlot $w={13} $ml={4}><FmtGlyph $wt={400} $fs={15}>−</FmtGlyph></StatusSlot>
          <Zoomer />
          <StatusSlot $w={12}><FmtGlyph $wt={400} $fs={15}>+</FmtGlyph></StatusSlot>
          <StatusPct>100%</StatusPct>
        </StatusRight>
      </Status>

      <Desk>
        <DeskPart $w={591} $c="#cee0e4" />
        <DeskPart $w={199} $c="#e2edef" />
        <DeskPart $w={200} $c="#e7f1f2" />
        <DeskPart $c="#cde0e4" />
      </Desk>

      <Dialog>
        <DlgHead>
          <DlgTitle>大于</DlgTitle>
          <DlgHelp>?</DlgHelp>
          <X size={19} strokeWidth={1.2} color="#222" />
        </DlgHead>
        <DlgLabel>为大于以下值的单元格设置格式:</DlgLabel>
        <DlgFields>
          <DlgInput>
            =$E:$E
            <RefBtn><svg width="12" height="15" viewBox="0 0 12 15" fill="#111"><path d="M6 0l5 6H8v5H4V6H1zM1 13h10v2H1z" /></svg></RefBtn>
          </DlgInput>
          <DlgText>设置为</DlgText>
          <DlgSelect>
            <SelectValue>红色文本</SelectValue>
            <DropBtn><Chev c="#666" /></DropBtn>
          </DlgSelect>
        </DlgFields>
        <DlgBtns>
          <DlgBtn $on>确定</DlgBtn>
          <DlgBtn>取消</DlgBtn>
        </DlgBtns>
      </Dialog>

      <Note $x={661} $y={467}>选中区域</Note>
      <Note $x={1106} $y={728}>设置为红色文本</Note>

      <Overlay width="1920" height="1039" viewBox="0 0 1920 1039">
        <path d="M688 494L825 606l10-5 1 20-21-3 4-7z" fill="#f8403f" />
        <path d="M1120 723L1318 638l-3-5 18 1-11 14-2-3z" fill="#f8403f" />
        <g fill="rgba(255,255,255,.75)" stroke="#d6d6d6" strokeWidth="1.300">
          <ellipse cx="1604" cy="875" rx="13" ry="18" />
          <ellipse cx="1630" cy="851" rx="13" ry="17" />
          <ellipse cx="1659" cy="853" rx="13" ry="17" />
          <ellipse cx="1680" cy="882" rx="13" ry="18" />
          <path d="M1640 876c16 0 22 14 32 24 12 14 4 42-32 42s-44-28-32-42c10-10 16-24 32-24z" />
          <text x="1472" y="942" fontFamily="Liberation Sans" fontWeight="700" fontSize="80" textLength="118" lengthAdjust="spacingAndGlyphs">Bai</text>
          <text x="1620" y="935" fontFamily="Liberation Sans" fontWeight="400" fontSize="38">du</text>
          <text x="1698" y="938" fontFamily="Noto Sans CJK SC" fontWeight="700" fontSize="56">经验</text>
          <text x="1474" y="988" fontFamily="Liberation Sans" fontSize="39" textLength="344" lengthAdjust="spacingAndGlyphs">jingyan.baidu.com</text>
        </g>
      </Overlay>
    </Page>
  );
}
